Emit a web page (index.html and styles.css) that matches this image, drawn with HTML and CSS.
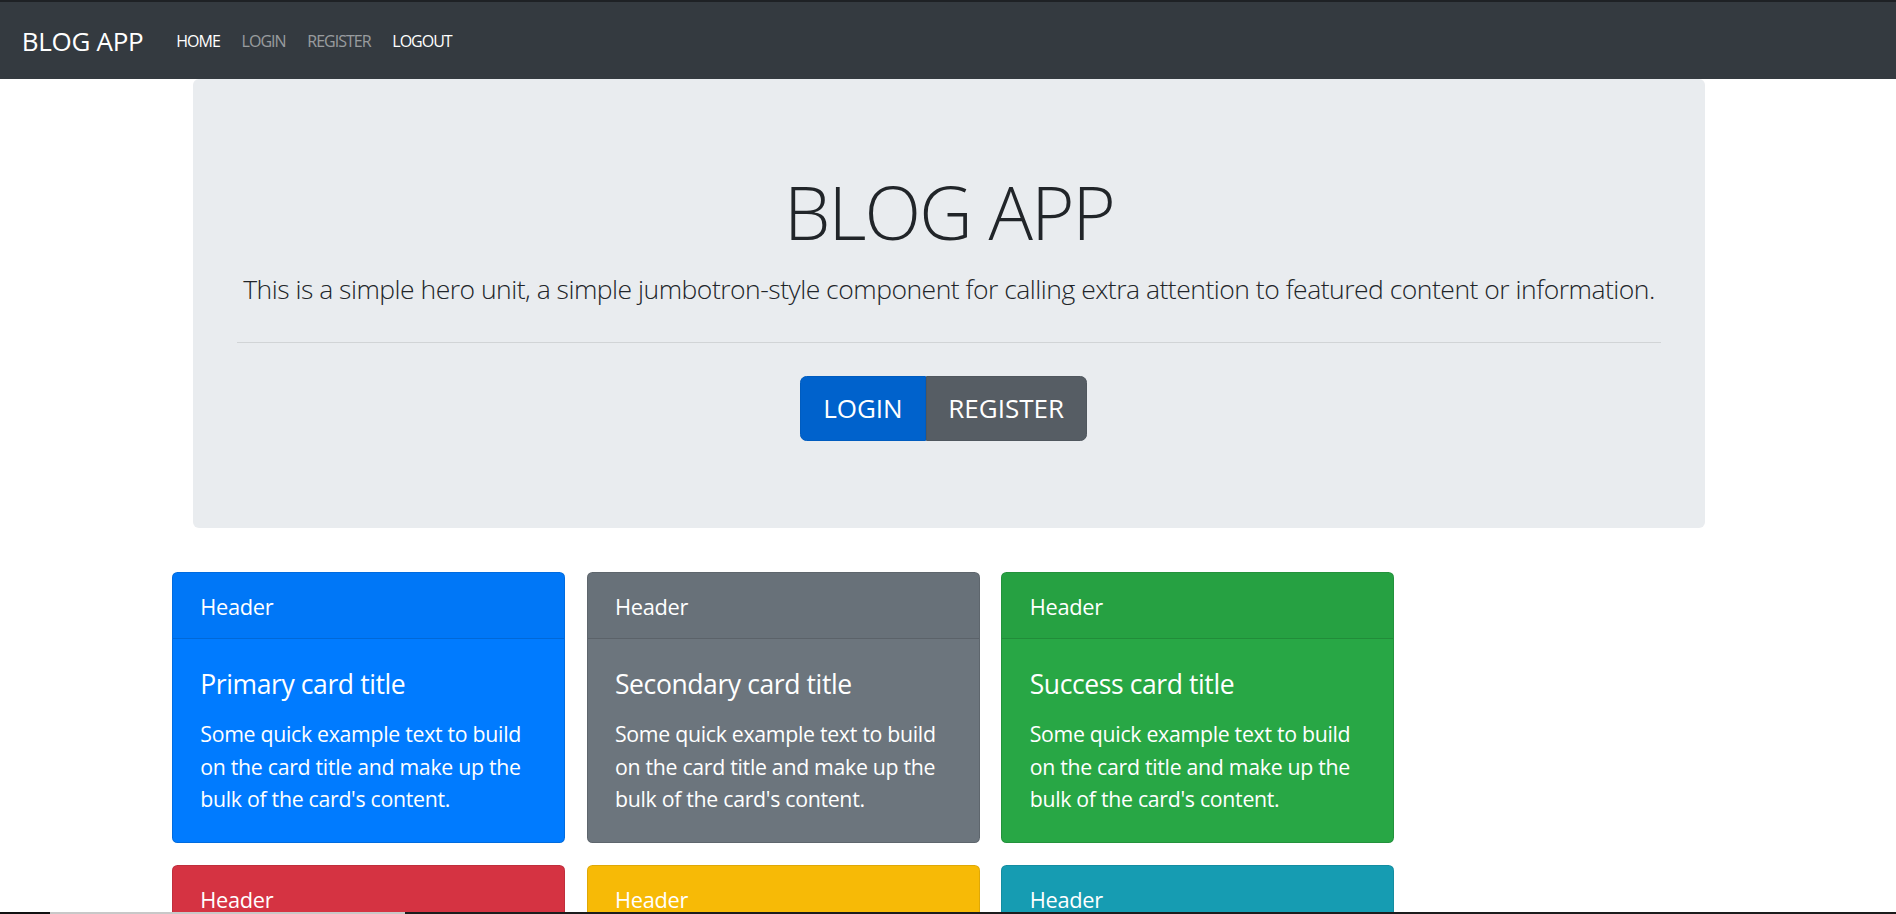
FILE: index.html
```html
<!DOCTYPE html>
<html lang="en">
<head>
<meta charset="utf-8">
<title>Blog App</title>
<link rel="stylesheet" href="styles.css">
</head>
<body>
<nav class="navbar">
  <a class="brand" href="#">BLOG APP</a>
  <ul class="nav">
    <li><a class="nav-link active" href="#">HOME</a></li>
    <li><a class="nav-link" href="#">LOGIN</a></li>
    <li><a class="nav-link" href="#">REGISTER</a></li>
    <li><a class="nav-link active" href="#">LOGOUT</a></li>
  </ul>
</nav>

<section class="jumbotron">
  <h1 class="display">BLOG APP</h1>
  <p class="lead">This is a simple hero unit, a simple jumbotron-style component for calling extra attention to featured content or information.</p>
  <hr class="divider">
  <div class="btn-group">
    <a class="btn btn-login" href="#">LOGIN</a>
    <a class="btn btn-register" href="#">REGISTER</a>
  </div>
</section>

<section class="cards">
  <div class="card card-primary">
    <div class="card-header">Header</div>
    <div class="card-body">
      <h5 class="card-title">Primary card title</h5>
      <p class="card-text">Some quick example text to build on the card title and make up the bulk of the card's content.</p>
    </div>
  </div>
  <div class="card card-secondary">
    <div class="card-header">Header</div>
    <div class="card-body">
      <h5 class="card-title">Secondary card title</h5>
      <p class="card-text">Some quick example text to build on the card title and make up the bulk of the card's content.</p>
    </div>
  </div>
  <div class="card card-success">
    <div class="card-header">Header</div>
    <div class="card-body">
      <h5 class="card-title">Success card title</h5>
      <p class="card-text">Some quick example text to build on the card title and make up the bulk of the card's content.</p>
    </div>
  </div>
  <div class="card card-danger">
    <div class="card-header">Header</div>
    <div class="card-body">
      <h5 class="card-title">Danger card title</h5>
      <p class="card-text">Some quick example text to build on the card title and make up the bulk of the card's content.</p>
    </div>
  </div>
  <div class="card card-warning">
    <div class="card-header">Header</div>
    <div class="card-body">
      <h5 class="card-title">Warning card title</h5>
      <p class="card-text">Some quick example text to build on the card title and make up the bulk of the card's content.</p>
    </div>
  </div>
  <div class="card card-info">
    <div class="card-header">Header</div>
    <div class="card-body">
      <h5 class="card-title">Info card title</h5>
      <p class="card-text">Some quick example text to build on the card title and make up the bulk of the card's content.</p>
    </div>
  </div>
</section>

<div class="screen-edge"></div>
</body>
</html>
```

FILE: styles.css
```css
* { box-sizing: border-box; }

html, body {
  margin: 0;
  padding: 0;
}

body {
  font-family: "Open Sans", "Noto Sans", sans-serif;
  color: #212529;
  background: #fff;
  font-size: 21.8px;
  line-height: 1.5;
}

a { text-decoration: none; }

/* Navbar */
.navbar {
  display: flex;
  align-items: center;
  height: 79px;
  padding: 0 21.8px;
  background: #343a40;
  border-top: 2px solid #1e2125;
}

.brand {
  color: #fff;
  font-size: 26px;
  line-height: 1;
  margin-right: 22px;
  letter-spacing: -0.3px;
}

.nav {
  display: flex;
  list-style: none;
  margin: 0;
  padding: 0;
}

.nav-link {
  display: block;
  padding: 0 10.9px;
  font-size: 16px;
  line-height: 1;
  color: rgba(255, 255, 255, 0.5);
  letter-spacing: -1px;
}

.nav-link.active { color: #fff; }

/* Jumbotron */
.jumbotron {
  margin-left: 193px;
  width: 1512px;
  height: 449px;
  padding: 87px 43.7px;
  background: #e9ecef;
  border-radius: 6px;
  text-align: center;
}

.display {
  margin: 0 0 10.9px;
  font-size: 74px;
  font-weight: 300;
  line-height: 91.7px;
  letter-spacing: -1.8px;
}

.lead {
  margin: 0;
  font-size: 26.5px;
  font-weight: 300;
  line-height: 41px;
  letter-spacing: -0.5px;
  white-space: nowrap;
}

.divider {
  margin: 32.75px 0;
  border: 0;
  border-top: 1px solid rgba(0, 0, 0, 0.1);
}

.btn-group {
  display: flex;
  justify-content: center;
  padding-right: 10.8px;
}

.btn {
  display: block;
  padding: 10.9px 21.8px;
  font-size: 26px;
  line-height: 41px;
  color: #fff;
  border: 1px solid transparent;
}

.btn-login {
  background: #0062cc;
  border-color: #005cbf;
  border-radius: 6.5px 0 0 6.5px;
}

.btn-register {
  background: #565d64;
  border-color: #50575e;
  border-radius: 0 6.5px 6.5px 0;
}

/* Cards */
.cards {
  display: grid;
  grid-template-columns: repeat(3, 393px);
  column-gap: 21.7px;
  row-gap: 22px;
  margin: 44px 0 40px 172px;
}

.card {
  color: #fff;
  border: 1px solid rgba(0, 0, 0, 0.125);
  border-radius: 5.5px;
  overflow: hidden;
}

.card-header {
  display: flex;
  align-items: center;
  height: 66px;
  padding: 3px 27.3px 0;
  font-size: 21.8px;
  background: rgba(0, 0, 0, 0.03);
  border-bottom: 1px solid rgba(0, 0, 0, 0.125);
  letter-spacing: -0.3px;
}

.card-body {
  padding: 28.5px 27.3px 27.3px;
}

.card-title {
  margin: 0 0 18px;
  font-size: 26.5px;
  font-weight: 400;
  line-height: 32.75px;
  letter-spacing: -0.4px;
}

.card-text {
  margin: 0;
  font-size: 21.3px;
  line-height: 32.3px;
  letter-spacing: -0.3px;
}

.card-primary { background: #007bff; }
.card-secondary { background: #6c757d; }
.card-success { background: #28a745; }
.card-danger { background: #dc3545; }
.card-warning { background: #ffc107; }
.card-info { background: #17a2b8; }

.screen-edge {
  position: fixed;
  left: 0;
  right: 0;
  bottom: 0;
  height: 2px;
  background: linear-gradient(to right, #111 0, #111 50px, #c8c8c8 50px, #c8c8c8 405px, #1c1c1c 405px);
}
```
